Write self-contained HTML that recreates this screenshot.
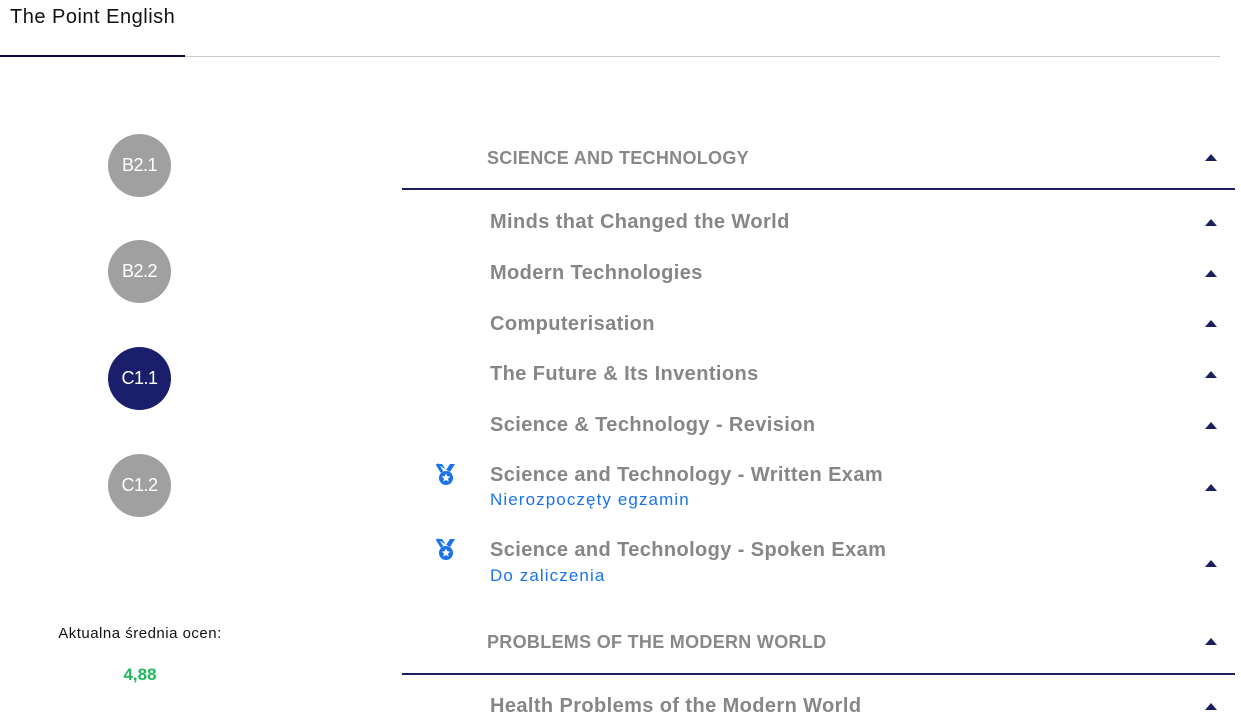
<!DOCTYPE html>
<html><head><meta charset="utf-8"><style>
body{margin:0;width:1241px;height:723px;overflow:hidden;background:#fff;font-family:"Liberation Sans",sans-serif;position:relative}
.a{position:absolute;white-space:nowrap}
.c{position:absolute;left:108px;width:63px;height:63px;border-radius:50%;background:#a0a0a0;color:#fff;font-size:18px;text-align:center;line-height:63px;letter-spacing:-0.5px}
.sec{position:absolute;left:487px;font-size:18px;color:#888;font-weight:bold;letter-spacing:0.3px}
.it{position:absolute;left:490px;font-size:20px;color:#868686;font-weight:bold;letter-spacing:0.4px}
.sub{position:absolute;left:490px;font-size:17px;color:#1a73e8;letter-spacing:1.1px}
.tri{position:absolute;left:1205px;width:0;height:0;border-left:6px solid transparent;border-right:6px solid transparent;border-bottom:7px solid #1b1f5e}
.ln{position:absolute;left:402px;width:833px;height:2px;background:#1b1f5e}
</style></head><body>
<div class="a" style="left:10px;top:6px;font-size:20px;color:#111;letter-spacing:0.5px">The Point English</div>
<div class="a" style="left:0;top:56px;width:1220px;height:1px;background:#ccc"></div>
<div class="a" style="left:0;top:55px;width:185px;height:2px;background:#0a0a3a"></div>

<div class="c" style="top:134px">B2.1</div>
<div class="c" style="top:240px">B2.2</div>
<div class="c" style="top:347px;background:#1b1f6b">C1.1</div>
<div class="c" style="top:454px">C1.2</div>

<div class="a" style="left:0;width:280px;text-align:center;top:625px;font-size:15px;color:#111;letter-spacing:0.5px">Aktualna średnia ocen:</div>
<div class="a" style="left:0;width:280px;text-align:center;top:665px;font-size:17px;color:#1fb85a;font-weight:bold">4,88</div>

<div class="sec" style="top:148px">SCIENCE AND TECHNOLOGY</div><div class="tri" style="top:154px"></div>
<div class="ln" style="top:188px"></div>
<div class="it" style="top:211px">Minds that Changed the World</div><div class="tri" style="top:219px"></div>
<div class="it" style="top:262px">Modern Technologies</div><div class="tri" style="top:270px"></div>
<div class="it" style="top:313px">Computerisation</div><div class="tri" style="top:320px"></div>
<div class="it" style="top:363px">The Future &amp; Its Inventions</div><div class="tri" style="top:371px"></div>
<div class="it" style="top:414px">Science &amp; Technology - Revision</div><div class="tri" style="top:422px"></div>
<svg class="a" style="left:435px;top:463px" width="22" height="24" viewBox="0 0 22 24"><path d="M2 1h5l4 6 4-6h5l-5 8" fill="#1a73e8"/><path d="M2 1l5 8" stroke="#1a73e8" stroke-width="3"/><circle cx="11" cy="15" r="7" fill="#1a73e8"/><path d="M11 10.5l1.3 2.8 3 .3-2.3 2 .7 3-2.7-1.6-2.7 1.6.7-3-2.3-2 3-.3z" fill="#fff"/></svg>
<div class="it" style="top:464px">Science and Technology - Written Exam</div><div class="tri" style="top:484px"></div>
<div class="sub" style="top:490px">Nierozpoczęty egzamin</div>
<svg class="a" style="left:435px;top:538px" width="22" height="24" viewBox="0 0 22 24"><path d="M2 1h5l4 6 4-6h5l-5 8" fill="#1a73e8"/><path d="M2 1l5 8" stroke="#1a73e8" stroke-width="3"/><circle cx="11" cy="15" r="7" fill="#1a73e8"/><path d="M11 10.5l1.3 2.8 3 .3-2.3 2 .7 3-2.7-1.6-2.7 1.6.7-3-2.3-2 3-.3z" fill="#fff"/></svg>
<div class="it" style="top:539px">Science and Technology - Spoken Exam</div><div class="tri" style="top:560px"></div>
<div class="sub" style="top:566px">Do zaliczenia</div>
<div class="sec" style="top:632px">PROBLEMS OF THE MODERN WORLD</div><div class="tri" style="top:638px"></div>
<div class="ln" style="top:673px"></div>
<div class="it" style="top:695px">Health Problems of the Modern World</div><div class="tri" style="top:703px"></div>
</body></html>
